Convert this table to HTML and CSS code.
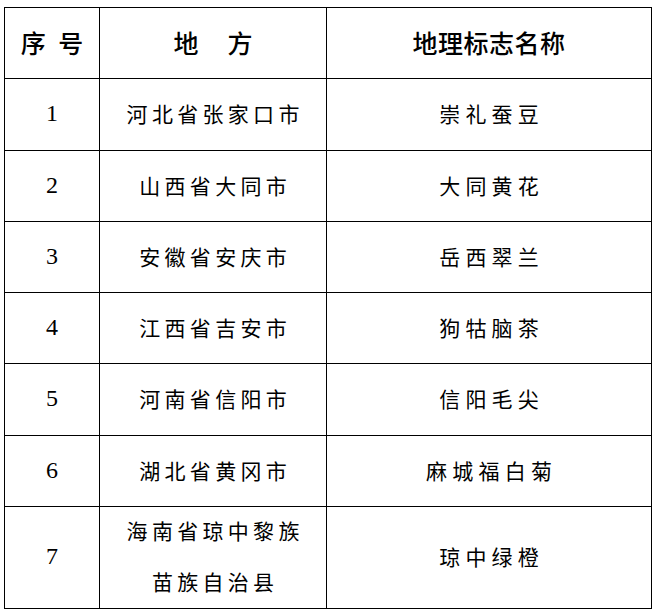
FILE: index.html
```html
<!DOCTYPE html>
<html lang="zh-CN">
<head>
<meta charset="utf-8">
<title>地理标志名称</title>
<link rel="stylesheet" href="styles.css">
</head>
<body>
<table class="gi-table">
  <colgroup>
    <col class="c-no">
    <col class="c-place">
    <col class="c-name">
  </colgroup>
  <thead>
    <tr class="row-head">
      <th><span class="h-no">序&ensp;号</span></th>
      <th><span class="h-place">地　方</span></th>
      <th><span class="h-name">地理标志名称</span></th>
    </tr>
  </thead>
  <tbody>
    <tr class="row-a"><td class="num">1</td><td><span class="cn">河北省张家口市</span></td><td><span class="cn wide">崇礼蚕豆</span></td></tr>
    <tr class="row-b"><td class="num">2</td><td><span class="cn">山西省大同市</span></td><td><span class="cn wide">大同黄花</span></td></tr>
    <tr class="row-b"><td class="num">3</td><td><span class="cn">安徽省安庆市</span></td><td><span class="cn wide">岳西翠兰</span></td></tr>
    <tr class="row-b"><td class="num">4</td><td><span class="cn">江西省吉安市</span></td><td><span class="cn wide">狗牯脑茶</span></td></tr>
    <tr class="row-a"><td class="num">5</td><td><span class="cn">河南省信阳市</span></td><td><span class="cn wide">信阳毛尖</span></td></tr>
    <tr class="row-b"><td class="num">6</td><td><span class="cn">湖北省黄冈市</span></td><td><span class="cn wide">麻城福白菊</span></td></tr>
    <tr class="row-tall"><td class="num">7</td><td><span class="cn two">海南省琼中黎族<br>苗族自治县</span></td><td><span class="cn wide">琼中绿橙</span></td></tr>
  </tbody>
</table>
</body>
</html>
```

FILE: styles.css
```css
html, body {
  margin: 0;
  padding: 0;
  background: #ffffff;
}

body {
  padding: 7px 0 0 4px;
}

.gi-table {
  border-collapse: collapse;
  table-layout: fixed;
  width: 647px;
  color: #000000;
}

.c-no { width: 95px; }
.c-place { width: 227px; }
.c-name { width: 325px; }

.gi-table th,
.gi-table td {
  border: 1px solid #000000;
  padding: 0 0 3px 0;
  text-align: center;
  vertical-align: middle;
}

.gi-table th {
  font-family: "Noto Sans CJK SC", sans-serif;
  font-weight: 500;
  font-size: 25px;
  line-height: 30px;
  padding-bottom: 2px;
}

.row-head { height: 71px; }
.row-a { height: 72px; }
.row-b { height: 71px; }
.row-tall { height: 102px; }

.h-place {
  letter-spacing: 2px;
  margin-right: -2px;
}

.h-name {
  letter-spacing: 0.5px;
}

.num {
  font-family: "Liberation Serif", "Times New Roman", serif;
  font-size: 24px;
  line-height: 28px;
}

.cn {
  display: inline-block;
  font-family: "Noto Sans CJK SC", sans-serif;
  font-weight: 400;
  font-size: 21px;
  line-height: 30px;
  letter-spacing: 4.3px;
  margin-right: -4.3px;
}

.cn.wide {
  letter-spacing: 5.2px;
  margin-right: -5.2px;
}

.cn.two {
  line-height: 51px;
  margin-top: -4px;
  margin-bottom: -4px;
}
```
